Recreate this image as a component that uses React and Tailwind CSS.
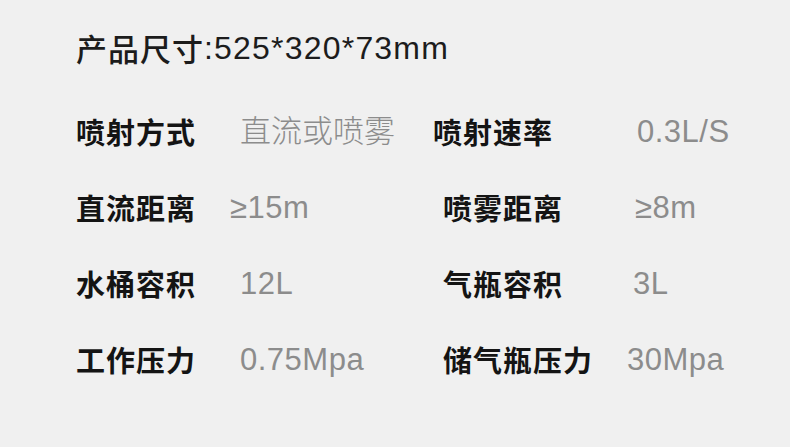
const font = { fontFamily: '"Liberation Sans", "Noto Sans CJK SC", sans-serif' };

const rows = [
  { a: '喷射方式', av: '直流或喷雾', b: '喷射速率', bv: '0.3L/S', w1: 'w-[193px] tracking-normal', w2: 'w-[204px]' },
  { a: '直流距离', av: '≥15m', b: '喷雾距离', bv: '≥8m', w1: 'w-[213px] ml-[-10px] tracking-[0.5px]', w2: 'w-[192px]' },
  { a: '水桶容积', av: '12L', b: '气瓶容积', bv: '3L', w1: 'w-[203px] tracking-[0.5px]', w2: 'w-[190px]' },
  { a: '工作压力', av: '0.75Mpa', b: '储气瓶压力', bv: '30Mpa', w1: 'w-[203px] tracking-[0.5px]', w2: 'w-[184px]' },
];

export default function App() {
  return (
    <div className="w-[790px] h-[447px] bg-[#f0f0f0] overflow-hidden" style={font}>
      <div className="pl-[76px] pt-[28px] h-[68px] flex items-center text-[31px] text-[#1c1c1c] font-medium">
        <span className="font-['Noto_Sans_CJK_SC'] tracking-[1px]">产品尺寸</span>
        <span className="tracking-[1.2px] text-[32px]">:525*320*73mm</span>
      </div>
      <div className="mt-[26px] pl-[76px]">
        {rows.map((r) => (
          <div key={r.a} className="h-[76px] flex items-center">
            <div className="w-[164px] text-[29px] font-bold text-[#141414] tracking-[1px] font-['Noto_Sans_CJK_SC']">{r.a}</div>
            <div className={`${r.w1} text-[31px] font-light text-[#8c8c8c]`}>{r.av}</div>
            <div className={`${r.w2} text-[29px] font-bold text-[#141414] tracking-[1px] font-['Noto_Sans_CJK_SC']`}>{r.b}</div>
            <div className="text-[31px] font-light text-[#8c8c8c] tracking-[0.5px]">{r.bv}</div>
          </div>
        ))}
      </div>
    </div>
  );
}
